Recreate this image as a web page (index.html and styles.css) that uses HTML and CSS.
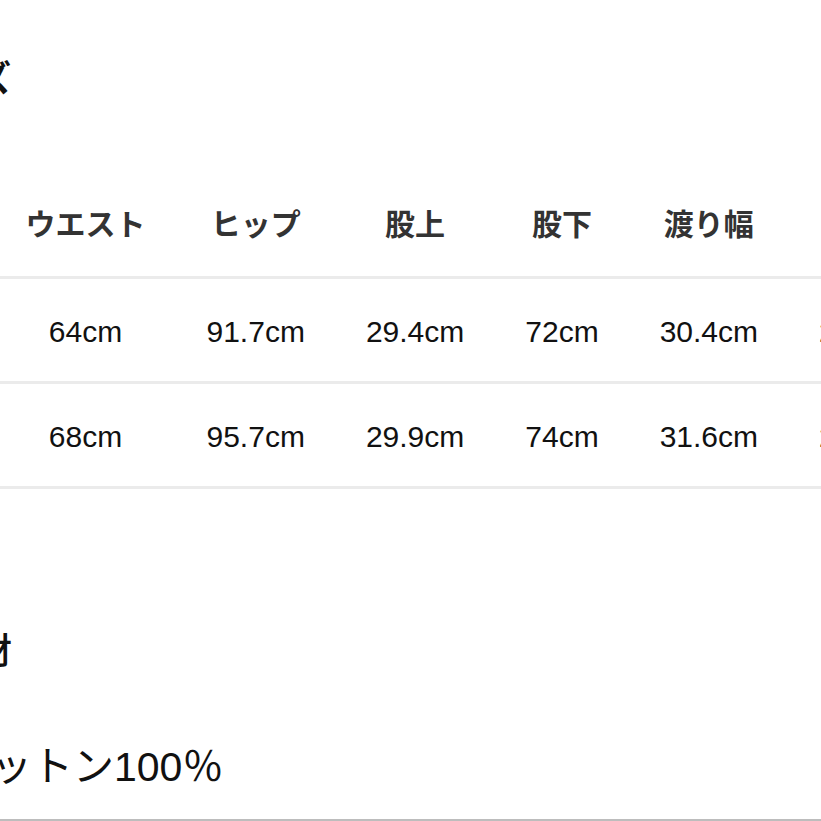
FILE: index.html
```html
<!DOCTYPE html>
<html lang="ja">
<head>
<meta charset="utf-8">
<title>サイズ・素材</title>
<link rel="stylesheet" href="styles.css">
</head>
<body>
<main class="page">
  <h2 class="title title-size">サイズ</h2>
  <table class="size-table">
    <thead>
      <tr>
        <th>ウエスト</th>
        <th>ヒップ</th>
        <th>股上</th>
        <th>股下</th>
        <th>渡り幅</th>
        <th>裾幅</th>
      </tr>
    </thead>
    <tbody>
      <tr>
        <td>64cm</td>
        <td>91.7cm</td>
        <td>29.4cm</td>
        <td>72cm</td>
        <td>30.4cm</td>
        <td>21.0cm</td>
      </tr>
      <tr>
        <td>68cm</td>
        <td>95.7cm</td>
        <td>29.9cm</td>
        <td>74cm</td>
        <td>31.6cm</td>
        <td>22.0cm</td>
      </tr>
    </tbody>
  </table>
  <h2 class="title title-material">素材</h2>
  <p class="material">コットン100％</p>
</main>
<div class="rule"></div>
</body>
</html>
```

FILE: styles.css
```css
html, body {
  margin: 0;
  padding: 0;
  background: #ffffff;
  overflow: hidden;
  width: 821px;
  height: 821px;
}

body {
  font-family: "Liberation Sans", "Noto Sans CJK JP", sans-serif;
  color: #111111;
  display: flex;
  flex-direction: column;
}

.page {
  margin-left: -100px;
  width: 1100px;
  height: 819px;
  display: flex;
  flex-direction: column;
  align-items: flex-start;
}

.title {
  font-family: "Noto Sans CJK JP", sans-serif;
  font-size: 36px;
  line-height: 44px;
  font-weight: 700;
  color: #111111;
  margin: 0;
  white-space: nowrap;
}

.title-size {
  margin-top: 54px;
  margin-left: 4px;
}

.size-table {
  margin-top: 74px;
  margin-left: 95px;
  border-collapse: collapse;
  white-space: nowrap;
  width: max-content;
}

.size-table th,
.size-table td {
  line-height: 36px;
  font-size: 30px;
  text-align: center;
  border-bottom: 3px solid #ebebeb;
}

.size-table th {
  padding: 32px 30.5px 36px;
  font-family: "Noto Sans CJK JP", sans-serif;
  font-weight: 700;
  color: #333333;
}

.size-table td {
  padding: 35px 30.5px 31px;
  font-weight: 400;
  color: #111111;
}

.title-material {
  margin-top: 137px;
  margin-left: 40px;
  font-weight: 500;
}

.material {
  margin: 73px 0 0 50px;
  font-family: "Liberation Sans", "Noto Sans CJK JP", sans-serif;
  font-size: 41px;
  line-height: 48px;
  color: #111111;
  white-space: nowrap;
}

.rule {
  height: 0;
  border-top: 2px solid #bdbdbd;
  width: 821px;
}
```
